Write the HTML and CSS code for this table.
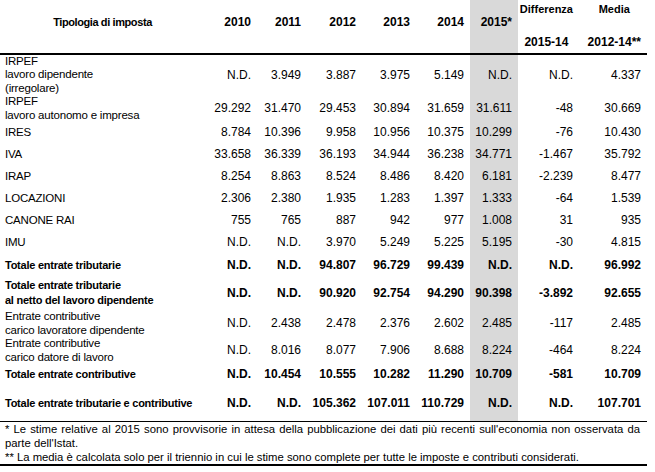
FILE: index.html
```html
<!DOCTYPE html>
<html lang="it">
<head>
<meta charset="utf-8">
<title>Tipologia di imposta</title>
<link rel="stylesheet" href="styles.css">
</head>
<body>
<div class="sheet">
  <div class="row head">
    <div class="cell label-head">Tipologia di imposta</div>
    <div class="cell year">2010</div>
    <div class="cell year">2011</div>
    <div class="cell year">2012</div>
    <div class="cell year">2013</div>
    <div class="cell year">2014</div>
    <div class="cell year shade">2015*</div>
    <div class="cell dual"><div class="stack"><span>Differenza</span><span>2015-14</span></div></div>
    <div class="cell dual"><div class="stack"><span>Media</span><span>2012-14**</span></div></div>
  </div>

  <div class="row h40">
    <div class="cell label tight">IRPEF<br>lavoro dipendente<br>(irregolare)</div>
    <div class="cell">N.D.</div><div class="cell">3.949</div><div class="cell">3.887</div><div class="cell">3.975</div><div class="cell">5.149</div><div class="cell shade">N.D.</div><div class="cell">N.D.</div><div class="cell">4.337</div>
  </div>
  <div class="row h26">
    <div class="cell label">IRPEF<br>lavoro autonomo e impresa</div>
    <div class="cell">29.292</div><div class="cell">31.470</div><div class="cell">29.453</div><div class="cell">30.894</div><div class="cell">31.659</div><div class="cell shade">31.611</div><div class="cell">-48</div><div class="cell">30.669</div>
  </div>
  <div class="row h22">
    <div class="cell label">IRES</div>
    <div class="cell">8.784</div><div class="cell">10.396</div><div class="cell">9.958</div><div class="cell">10.956</div><div class="cell">10.375</div><div class="cell shade">10.299</div><div class="cell">-76</div><div class="cell">10.430</div>
  </div>
  <div class="row h22">
    <div class="cell label">IVA</div>
    <div class="cell">33.658</div><div class="cell">36.339</div><div class="cell">36.193</div><div class="cell">34.944</div><div class="cell">36.238</div><div class="cell shade">34.771</div><div class="cell">-1.467</div><div class="cell">35.792</div>
  </div>
  <div class="row h22">
    <div class="cell label">IRAP</div>
    <div class="cell">8.254</div><div class="cell">8.863</div><div class="cell">8.524</div><div class="cell">8.486</div><div class="cell">8.420</div><div class="cell shade">6.181</div><div class="cell">-2.239</div><div class="cell">8.477</div>
  </div>
  <div class="row h22">
    <div class="cell label">LOCAZIONI</div>
    <div class="cell">2.306</div><div class="cell">2.380</div><div class="cell">1.935</div><div class="cell">1.283</div><div class="cell">1.397</div><div class="cell shade">1.333</div><div class="cell">-64</div><div class="cell">1.539</div>
  </div>
  <div class="row h22">
    <div class="cell label">CANONE RAI</div>
    <div class="cell">755</div><div class="cell">765</div><div class="cell">887</div><div class="cell">942</div><div class="cell">977</div><div class="cell shade">1.008</div><div class="cell">31</div><div class="cell">935</div>
  </div>
  <div class="row h22">
    <div class="cell label">IMU</div>
    <div class="cell">N.D.</div><div class="cell">N.D.</div><div class="cell">3.970</div><div class="cell">5.249</div><div class="cell">5.225</div><div class="cell shade">5.195</div><div class="cell">-30</div><div class="cell">4.815</div>
  </div>
  <div class="row h23 total">
    <div class="cell label">Totale entrate tributarie</div>
    <div class="cell">N.D.</div><div class="cell">N.D.</div><div class="cell">94.807</div><div class="cell">96.729</div><div class="cell">99.439</div><div class="cell shade">N.D.</div><div class="cell">N.D.</div><div class="cell">96.992</div>
  </div>
  <div class="row h33 total">
    <div class="cell label wide">Totale entrate tributarie<br>al netto del lavoro dipendente</div>
    <div class="cell">N.D.</div><div class="cell">N.D.</div><div class="cell">90.920</div><div class="cell">92.754</div><div class="cell">94.290</div><div class="cell shade">90.398</div><div class="cell">-3.892</div><div class="cell">92.655</div>
  </div>
  <div class="row h28">
    <div class="cell label">Entrate contributive<br>carico lavoratore dipendente</div>
    <div class="cell">N.D.</div><div class="cell">2.438</div><div class="cell">2.478</div><div class="cell">2.376</div><div class="cell">2.602</div><div class="cell shade">2.485</div><div class="cell">-117</div><div class="cell">2.485</div>
  </div>
  <div class="row h26">
    <div class="cell label">Entrate contributive<br>carico datore di lavoro</div>
    <div class="cell">N.D.</div><div class="cell">8.016</div><div class="cell">8.077</div><div class="cell">7.906</div><div class="cell">8.688</div><div class="cell shade">8.224</div><div class="cell">-464</div><div class="cell">8.224</div>
  </div>
  <div class="row h22 total">
    <div class="cell label">Totale entrate contributive</div>
    <div class="cell">N.D.</div><div class="cell">10.454</div><div class="cell">10.555</div><div class="cell">10.282</div><div class="cell">11.290</div><div class="cell shade">10.709</div><div class="cell">-581</div><div class="cell">10.709</div>
  </div>
  <div class="row h36 total">
    <div class="cell label">Totale entrate tributarie e contributive</div>
    <div class="cell">N.D.</div><div class="cell">N.D.</div><div class="cell">105.362</div><div class="cell">107.011</div><div class="cell">110.729</div><div class="cell shade">N.D.</div><div class="cell">N.D.</div><div class="cell">107.701</div>
  </div>

  <div class="notes">
    <p><span class="full-line">* Le stime relative al 2015 sono provvisorie in attesa della pubblicazione dei dati più recenti sull'economia non osservata da</span>parte dell'Istat.</p>
    <p>** La media è calcolata solo per il triennio in cui le stime sono complete per tutte le imposte e contributi considerati.</p>
  </div>
</div>
</body>
</html>
```

FILE: styles.css
```css
html, body {
  margin: 0;
  padding: 0;
  background: #fff;
}

body {
  font-family: "Liberation Sans", Arial, sans-serif;
  color: #000;
}

.sheet {
  width: 647px;
}

.row {
  display: grid;
  grid-template-columns: 205px 52px 50px 55px 54px 54px 48px 61px 68px;
  grid-template-rows: 100%;
}

.cell {
  display: flex;
  align-items: center;
  justify-content: flex-end;
  padding-right: 6px;
  font-size: 12px;
  line-height: 14px;
  white-space: nowrap;
}

.shade {
  background: #d9d9d9;
}

/* header */
.head {
  height: 53px;
  border-bottom: 2px solid #000;
  font-weight: bold;
}

.head .cell {
  align-items: flex-start;
  padding-top: 15px;
}

.label-head {
  justify-content: center;
  font-size: 11px;
  letter-spacing: -0.4px;
  padding-right: 0;
}

.head .dual {
  padding-top: 2px;
  padding-bottom: 4px;
  align-items: stretch;
}

.stack {
  display: flex;
  flex-direction: column;
  align-items: center;
  justify-content: space-between;
  font-size: 11px;
}

.stack span:last-child {
  font-size: 12px;
}

/* body rows */
.h22 { height: 22px; }
.h23 { height: 23px; }
.h26 { height: 26px; }
.h28 { height: 28px; }
.h33 { height: 33px; }
.h36 { height: 36px; }
.h40 { height: 40px; }

.label {
  justify-content: flex-start;
  padding-left: 5px;
  padding-right: 0;
  font-size: 11.5px;
  letter-spacing: -0.2px;
}

.label.tight {
  line-height: 13.5px;
}

.total {
  font-weight: bold;
}

.total .label {
  font-size: 11px;
  letter-spacing: -0.25px;
}

.total .label.wide {
  line-height: 15px;
}

/* footnotes */
.notes {
  border-top: 1px solid #000;
  border-bottom: 2px solid #000;
  padding: 0 7px 0 5px;
  font-size: 11.3px;
  line-height: 14px;
  text-align: justify;
}

.notes p {
  margin: 0;
}

.full-line {
  display: block;
  text-align-last: justify;
}
```
